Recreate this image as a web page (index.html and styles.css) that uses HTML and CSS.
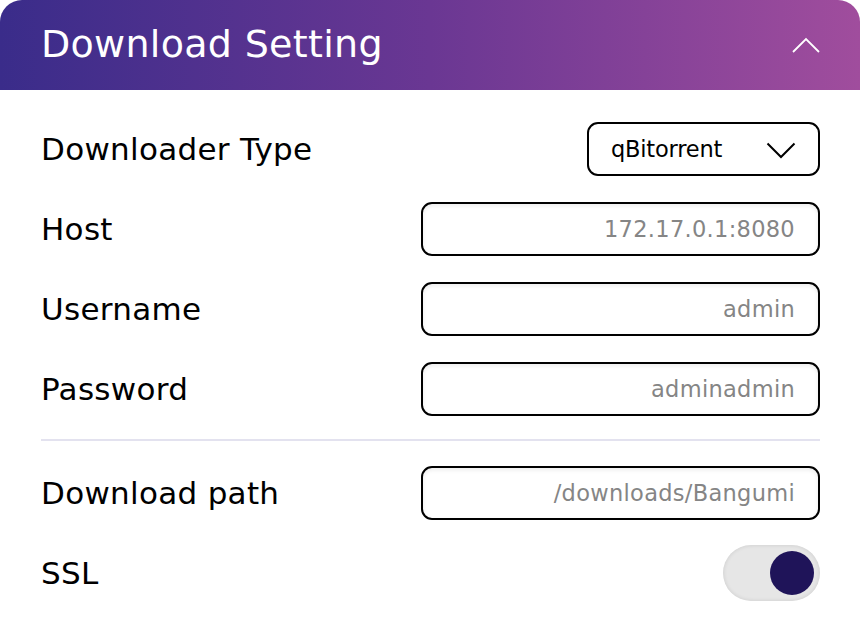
FILE: index.html
```html
<!DOCTYPE html>
<html lang="en">
<head>
<meta charset="utf-8">
<title>Download Setting</title>
<link rel="stylesheet" href="styles.css">
</head>
<body>
<section class="card">
  <header class="card-head">
    <h1 class="card-title">Download Setting</h1>
    <svg class="chev-up" width="28" height="16" viewBox="0 0 28 16"><path d="M1 15 L14 2 L27 15" fill="none" stroke="#fff" stroke-width="1.8"/></svg>
  </header>
  <div class="card-body">
    <div class="row">
      <span class="label">Downloader Type</span>
      <div class="select"><span>qBitorrent</span>
        <svg width="30" height="17" viewBox="0 0 30 17"><path d="M1.5 1.5 L15 15 L28.5 1.5" fill="none" stroke="#000" stroke-width="2"/></svg>
      </div>
    </div>
    <div class="row">
      <span class="label">Host</span>
      <div class="input">172.17.0.1:8080</div>
    </div>
    <div class="row">
      <span class="label">Username</span>
      <div class="input">admin</div>
    </div>
    <div class="row">
      <span class="label">Password</span>
      <div class="input">adminadmin</div>
    </div>
    <hr class="divider">
    <div class="row">
      <span class="label">Download path</span>
      <div class="input">/downloads/Bangumi</div>
    </div>
    <div class="row">
      <span class="label">SSL</span>
      <div class="toggle"><span class="knob"></span></div>
    </div>
  </div>
</section>
</body>
</html>
```
FILE: styles.css
```css
html, body {
  margin: 0;
  padding: 0;
  background: #ffffff;
}
body {
  font-family: "DejaVu Sans", "Liberation Sans", sans-serif;
  color: #000;
}
.card {
  width: 860px;
  height: 634px;
  background: #fff;
  border-radius: 22px 22px 0 0;
  overflow: hidden;
}
.card-head {
  height: 90px;
  box-sizing: border-box;
  padding: 0 40px 0 41px;
  display: flex;
  align-items: center;
  justify-content: space-between;
  background: linear-gradient(90deg, #3a2c8a 0%, #6a3793 50%, #a04d9d 100%);
}
.card-title {
  margin: 0;
  font-weight: normal;
  font-size: 38px;
  color: #fff;
  line-height: 1;
  letter-spacing: 0.3px;
  padding-bottom: 2px;
}
.chev-up {
  display: block;
}
.card-body {
  padding: 32px 40px 0 41px;
  display: flex;
  flex-direction: column;
  gap: 26px;
}
.row {
  height: 54px;
  display: flex;
  align-items: center;
  justify-content: space-between;
}
.label {
  font-size: 31px;
  letter-spacing: 0.3px;
}
.select {
  width: 233px;
  height: 54px;
  box-sizing: border-box;
  border: 2px solid #000;
  border-radius: 11px;
  display: flex;
  align-items: center;
  justify-content: space-between;
  padding: 0 22px 0 22px;
  font-size: 22.5px;
  letter-spacing: -0.2px;
}
.select svg {
  display: block;
  margin-top: 2px;
}
.input {
  width: 399px;
  height: 54px;
  box-sizing: border-box;
  border: 2px solid #000;
  border-radius: 11px;
  box-shadow: inset 0 2px 4px rgba(0,0,0,0.08);
  display: flex;
  align-items: center;
  justify-content: flex-end;
  padding: 0 23px 0 20px;
  font-size: 22.5px;
  color: #858585;
  letter-spacing: 0.3px;
}
.divider {
  margin: -3px 0 -1px;
  border: 0;
  height: 2px;
  background: #e3e2ef;
}
.toggle {
  width: 97px;
  height: 56px;
  box-sizing: border-box;
  border-radius: 28px;
  background: #e6e6e6;
  box-shadow: inset 0 0 4px rgba(0,0,0,0.12);
  display: flex;
  align-items: center;
  justify-content: flex-end;
  padding-right: 6px;
}
.knob {
  width: 44px;
  height: 44px;
  border-radius: 50%;
  background: #1f1459;
}
```
